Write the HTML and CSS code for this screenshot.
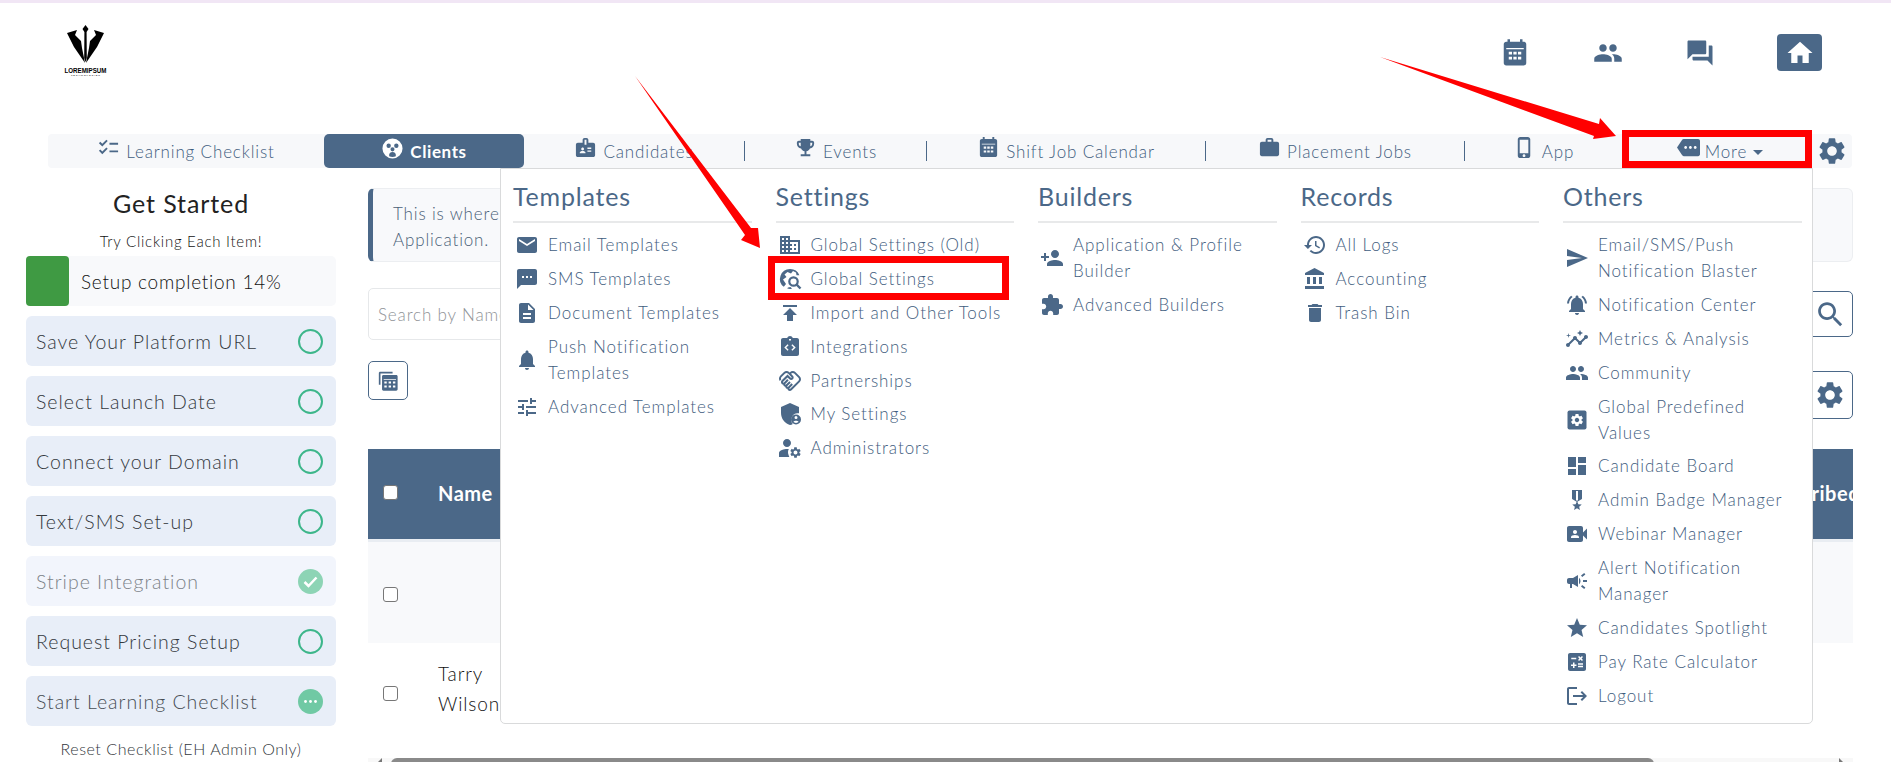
FILE: index.html
```html
<!DOCTYPE html>
<html lang="en">
<head>
<meta charset="utf-8">
<title>Clients</title>
<link rel="stylesheet" href="styles.css">
</head>
<body>
<svg class="defs" width="0" height="0" aria-hidden="true">
<symbol id="i-cal" viewBox="0 0 24 24"><path fill-rule="evenodd" d="M19 3h-1V1h-2v2H8V1H6v2H5c-1.1 0-2 .9-2 2v15c0 1.1.9 2 2 2h14c1.1 0 2-.9 2-2V5c0-1.1-.9-2-2-2zM5 8h14v.9H5zM7 11h2.6v2.2H7zM10.7 11h2.6v2.2h-2.6zM14.4 11H17v2.2h-2.6zM7 15h2.6v2.2H7zM10.7 15h2.6v2.2h-2.6zM14.4 15H17v2.2h-2.6z"/></symbol>
<symbol id="i-people" viewBox="0 0 24 24"><path d="M16 11c1.66 0 2.99-1.34 2.99-3S17.66 5 16 5c-1.66 0-3 1.34-3 3s1.34 3 3 3zm-8 0c1.66 0 2.99-1.34 2.99-3S9.66 5 8 5C6.34 5 5 6.34 5 8s1.34 3 3 3zm0 2c-2.33 0-7 1.17-7 3.5V19h14v-2.5c0-2.33-4.67-3.5-7-3.5zm8 0c-.29 0-.62.02-.97.05 1.16.84 1.97 1.97 1.97 3.45V19h6v-2.5c0-2.33-4.67-3.5-7-3.5z"/></symbol>
<symbol id="i-forum" viewBox="0 0 24 24"><path d="M21 6h-2v9H6v2c0 .55.45 1 1 1h11l4 4V7c0-.55-.45-1-1-1zm-4 6V3c0-.55-.45-1-1-1H3c-.55 0-1 .45-1 1v14l4-4h10c.55 0 1-.45 1-1z"/></symbol>
<symbol id="i-home" viewBox="0 0 24 24"><path d="M10 20v-6h4v6h5v-8h3L12 3 2 12h3v8z"/></symbol>
<symbol id="i-gear" viewBox="0 0 24 24"><path d="M19.14 12.94c.04-.3.06-.61.06-.94 0-.32-.02-.64-.07-.94l2.03-1.58c.18-.14.23-.41.12-.61l-1.92-3.32c-.12-.22-.37-.29-.59-.22l-2.39.96c-.5-.38-1.03-.7-1.62-.94l-.36-2.54c-.04-.24-.24-.41-.48-.41h-3.84c-.24 0-.43.17-.47.41l-.36 2.54c-.59.24-1.13.57-1.62.94l-2.39-.96c-.22-.08-.47 0-.59.22L2.74 8.87c-.12.21-.08.47.12.61l2.03 1.58c-.05.3-.09.63-.09.94s.02.64.07.94l-2.03 1.58c-.18.14-.23.41-.12.61l1.92 3.32c.12.22.37.29.59.22l2.39-.96c.5.38 1.03.7 1.62.94l.36 2.54c.05.24.24.41.48.41h3.84c.24 0 .44-.17.47-.41l.36-2.54c.59-.24 1.13-.56 1.62-.94l2.39.96c.22.08.47 0 .59-.22l1.92-3.32c.12-.22.07-.47-.12-.61l-2.01-1.58zM12 15.6c-1.98 0-3.6-1.62-3.6-3.6s1.62-3.6 3.6-3.6 3.6 1.62 3.6 3.6-1.62 3.6-3.6 3.6z"/></symbol>
<symbol id="i-check" viewBox="0 0 24 24"><path d="M22 7h-9v2h9V7zm0 8h-9v2h9v-2zM5.54 11 2 7.46l1.41-1.41 2.12 2.12 4.24-4.24 1.41 1.41L5.54 11zm0 8L2 15.46l1.41-1.41 2.12 2.12 4.24-4.24 1.41 1.41L5.54 19z"/></symbol>
<symbol id="i-clients" viewBox="0 0 24 24"><path fill-rule="evenodd" d="M12 1.500a10.500 10.500 0 1 0 0 21 10.500 10.500 0 0 0 0-21zM8 6.800a2.300 2.300 0 1 1 0 4.600 2.300 2.300 0 0 1 0-4.600zM16 6.800a2.300 2.300 0 1 1 0 4.600 2.300 2.300 0 0 1 0-4.600zM12 10.800a2.100 2.100 0 1 1 0 4.200 2.100 2.100 0 0 1 0-4.200zM8.500 20c-.3-2.800 1.200-4.300 3.500-4.300s3.800 1.500 3.500 4.300c-2.300 1-4.700 1-7 0z"/></symbol>
<symbol id="i-badge" viewBox="0 0 24 24"><path d="M20 7h-5V4c0-1.1-.9-2-2-2h-2c-1.1 0-2 .9-2 2v3H4c-1.1 0-2 .9-2 2v11c0 1.1.9 2 2 2h16c1.1 0 2-.9 2-2V9c0-1.1-.9-2-2-2zM9 12c.83 0 1.5.67 1.5 1.5S9.83 15 9 15s-1.5-.67-1.5-1.5S8.17 12 9 12zm3 6H6v-.43c0-.6.36-1.15.92-1.39.64-.28 1.34-.43 2.08-.43s1.44.15 2.08.43c.55.24.92.78.92 1.39V18zm1-9h-2V4h2v5zm5 7.5h-4V15h4v1.5zm0-3h-4V12h4v1.5z"/></symbol>
<symbol id="i-trophy" viewBox="0 0 24 24"><path d="M19 5h-2V3H7v2H5c-1.1 0-2 .9-2 2v1c0 2.55 1.92 4.63 4.39 4.94.63 1.5 1.98 2.63 3.61 2.96V19H7v2h10v-2h-4v-3.1c1.63-.33 2.98-1.46 3.61-2.96C19.08 12.63 21 10.55 21 8V7c0-1.1-.9-2-2-2zM5 8V7h2v3.82C5.84 10.4 5 9.3 5 8zm14 0c0 1.3-.84 2.4-2 2.82V7h2v1z"/></symbol>
<symbol id="i-work" viewBox="0 0 24 24"><path d="M20 6h-4V4c0-1.11-.89-2-2-2h-4c-1.11 0-2 .89-2 2v2H4c-1.11 0-1.99.89-1.99 2L2 19c0 1.11.89 2 2 2h16c1.11 0 2-.89 2-2V8c0-1.11-.89-2-2-2zm-6 0h-4V4h4v2z"/></symbol>
<symbol id="i-phone" viewBox="0 0 24 24"><path d="M15.5 1h-8C6.12 1 5 2.12 5 3.5v17C5 21.88 6.12 23 7.5 23h8c1.38 0 2.5-1.12 2.5-2.5v-17C18 2.12 16.88 1 15.5 1zm-4 21c-.83 0-1.5-.67-1.5-1.5s.67-1.5 1.5-1.5 1.5.67 1.5 1.5-.67 1.5-1.5 1.5zm4.5-4H7V4h9v14z"/></symbol>
<symbol id="i-more" viewBox="0 0 24 24"><path d="M22 3H7c-.69 0-1.23.35-1.59.88L0 12l5.41 8.11c.36.53.9.89 1.59.89h15c1.1 0 2-.9 2-2V5c0-1.1-.9-2-2-2zM9 13.5c-.83 0-1.5-.67-1.5-1.5s.67-1.5 1.5-1.5 1.5.67 1.5 1.5-.67 1.5-1.5 1.5zm5 0c-.83 0-1.5-.67-1.5-1.5s.67-1.5 1.5-1.5 1.5.67 1.5 1.5-.67 1.5-1.5 1.5zm5 0c-.83 0-1.5-.67-1.5-1.5s.67-1.5 1.5-1.5 1.5.67 1.5 1.5-.67 1.5-1.5 1.5z"/></symbol>
<symbol id="i-search" viewBox="0 0 24 24"><path d="M15.5 14h-.79l-.28-.27C15.41 12.59 16 11.11 16 9.5 16 5.91 13.09 3 9.5 3S3 5.91 3 9.5 5.91 16 9.5 16c1.61 0 3.09-.59 4.23-1.57l.27.28v.79l5 4.99L20.49 19l-4.99-5zm-6 0C7.01 14 5 11.99 5 9.5S7.01 5 9.5 5 14 7.01 14 9.5 11.99 14 9.5 14z"/></symbol>
<symbol id="i-copycal" viewBox="0 0 24 24"><path d="M2 3.5C2 2.7 2.7 2 3.500 2H17v1.800H3.800V16H2z"/><path fill-rule="evenodd" d="M7 5.500h14c.8 0 1.500.7 1.500 1.500v14c0 .8-.7 1.500-1.500 1.500H7c-.8 0-1.500-.7-1.500-1.500V7c0-.8.7-1.500 1.500-1.500zM7.300 9.800v.9h13.400v-.9zM8 12.500h2.600v2.200H8zM12.700 12.500h2.600v2.200h-2.600zM17.400 12.500H20v2.200h-2.600zM8 16.800h2.600V19H8zM12.700 16.800h2.600V19h-2.600zM17.400 16.800H20V19h-2.600z"/></symbol>
<symbol id="i-email" viewBox="0 0 24 24"><path d="M20 4H4c-1.100 0-1.990.9-1.990 2L2 18c0 1.100.9 2 2 2h16c1.100 0 2-.9 2-2V6c0-1.100-.9-2-2-2zm0 4l-8 5-8-5V6l8 5 8-5v2z"/></symbol>
<symbol id="i-sms" viewBox="0 0 24 24"><path d="M20 2H4c-1.100 0-1.990.9-1.990 2L2 22l4-4h14c1.100 0 2-.9 2-2V4c0-1.100-.9-2-2-2zM9 11H7V9h2v2zm4 0h-2V9h2v2zm4 0h-2V9h2v2z"/></symbol>
<symbol id="i-doc" viewBox="0 0 24 24"><path d="M14 2H6c-1.100 0-1.990.9-1.990 2L4 20c0 1.100.89 2 1.990 2H18c1.100 0 2-.9 2-2V8l-6-6zm2 16H8v-2h8v2zm0-4H8v-2h8v2zm-3-5V3.500L18.500 9H13z"/></symbol>
<symbol id="i-bell" viewBox="0 0 24 24"><path d="M12 22c1.100 0 2-.9 2-2h-4c0 1.100.89 2 2 2zm6-6v-5c0-3.070-1.640-5.640-4.500-6.320V4c0-.83-.67-1.500-1.500-1.500s-1.500.67-1.500 1.500v.68C7.630 5.360 6 7.920 6 11v5l-2 2v1h16v-1l-2-2z"/></symbol>
<symbol id="i-tune" viewBox="0 0 24 24"><path d="M3 17v2h6v-2H3zM3 5v2h10V5H3zm10 16v-2h8v-2h-8v-2h-2v6h2zM7 9v2H3v2h4v2h2V9H7zm14 4v-2H11v2h10zm-6-4h2V7h4V5h-4V3h-2v6z"/></symbol>
<symbol id="i-domain" viewBox="0 0 24 24"><path d="M12 7V3H2v18h20V7H12zM6 19H4v-2h2v2zm0-4H4v-2h2v2zm0-4H4V9h2v2zm0-4H4V5h2v2zm4 12H8v-2h2v2zm0-4H8v-2h2v2zm0-4H8V9h2v2zm0-4H8V5h2v2zm10 12h-8v-2h2v-2h-2v-2h2v-2h-2V9h8v10zm-2-8h-2v2h2v-2zm0 4h-2v2h2v-2z"/></symbol>
<symbol id="i-globe" viewBox="0 0 24 24"><path d="M12 2a10 10 0 0 0-6.200 17.850L8 17l-3-4.500 3.500-2.500L6.500 7.500 9.500 5l3.500 1.500 2-2.500 3 1.500.5 2.800h2.900A10 10 0 0 0 12 2zM12.500 20l-2.500.5-.8 1.100A10 10 0 0 0 14 21.800z"/><circle cx="15.500" cy="14.500" r="4.200" fill="none" stroke="currentColor" stroke-width="2.200"/><path d="M18.500 17.500 22.500 21.500" stroke="currentColor" stroke-width="2.400"/></symbol>
<symbol id="i-publish" viewBox="0 0 24 24"><path d="M5 4v2h14V4H5zm0 10h4v6h6v-6h4l-7-7-7 7z"/></symbol>
<symbol id="i-code" viewBox="0 0 24 24"><path fill-rule="evenodd" d="M19 3h-4.180C14.400 1.840 13.300 1 12 1s-2.400.84-2.820 2H5c-1.100 0-2 .9-2 2v14c0 1.100.9 2 2 2h14c1.100 0 2-.9 2-2V5c0-1.100-.9-2-2-2zM11 4h2v1.500h-2zM9.600 9.200l1 1-2.300 2.300 2.300 2.300-1 1-3.300-3.300zM14.400 9.200l3.300 3.300-3.300 3.300-1-1 2.300-2.300-2.300-2.300z"/></symbol>
<symbol id="i-hands" viewBox="0 0 24 24"><path d="M12.220 19.850c-.18.18-.5.21-.71 0-.18-.18-.21-.5 0-.71l3.390-3.390-1.410-1.410-3.390 3.390c-.19.2-.51.19-.71 0-.21-.21-.18-.53 0-.71l3.390-3.390-1.410-1.410-3.390 3.390c-.18.18-.5.21-.71 0-.19-.19-.19-.51 0-.71l3.390-3.390-1.420-1.410-3.390 3.390c-.18.18-.5.21-.71 0-.19-.2-.19-.51 0-.71L9.520 8.400l1.870 1.860c.95.95 2.590.94 3.540 0 .98-.98.98-2.560 0-3.540l-1.860-1.860.28-.28c.78-.78 2.050-.78 2.830 0l4.240 4.240c.78.78.78 2.050 0 2.830l-8.200 8.200zm9.610-6.780c1.560-1.560 1.560-4.090 0-5.660l-4.240-4.240c-1.560-1.560-4.090-1.560-5.660 0l-.28.28-.28-.28c-1.560-1.560-4.090-1.560-5.660 0L2.170 6.710c-1.420 1.420-1.550 3.630-.4 5.190l1.450-1.450c-.39-.75-.26-1.700.37-2.330l3.540-3.540c.78-.78 2.050-.78 2.830 0l3.560 3.560c.18.18.21.5 0 .71-.21.21-.53.18-.71 0L9.520 5.570l-5.800 5.790c-.98.97-.98 2.560 0 3.540.39.39.89.63 1.420.7.07.52.3 1.020.7 1.420.4.4.9.63 1.420.7.07.52.3 1.020.7 1.420.4.4.9.63 1.420.7.07.54.31 1.030.7 1.420.47.47 1.100.73 1.770.73.67 0 1.300-.26 1.770-.73l8.210-8.190z"/></symbol>
<symbol id="i-shield" viewBox="0 0 24 24"><path d="M12 1 3 5v6c0 5.550 3.840 10.740 9 12 1-.25 1.900-.6 2.800-1.100A6.500 6.500 0 0 1 21 11.300V5z"/><path fill-rule="evenodd" d="M18 12.500a5 5 0 1 0 0 10 5 5 0 0 0 0-10zm0 1.600a1.500 1.500 0 1 1 0 3 1.500 1.500 0 0 1 0-3zm0 6.900c-1.100 0-2-.5-2.500-1.200.4-.7 1.500-1 2.500-1s2.100.3 2.500 1c-.5.7-1.400 1.200-2.500 1.200z"/></symbol>
<symbol id="i-admin" viewBox="0 0 24 24"><path d="M9 11c2.200 0 4-1.800 4-4s-1.800-4-4-4-4 1.800-4 4 1.800 4 4 4zm1 2.100C9.700 13 9.300 13 9 13c-2.700 0-8 1.300-8 4v4h10.300C10.500 19 10 17.600 10 16c0-1 .3-2 .8-2.900z"/><use href="#i-gear" x="11" y="10" width="13" height="13"/></symbol>
<symbol id="i-personadd" viewBox="0 0 24 24"><path d="M15 12c2.210 0 4-1.790 4-4s-1.790-4-4-4-4 1.790-4 4 1.790 4 4 4zm-9-2V7H4v3H1v2h3v3h2v-3h3v-2H6zm9 4c-2.670 0-8 1.340-8 4v2h16v-2c0-2.660-5.330-4-8-4z"/></symbol>
<symbol id="i-puzzle" viewBox="0 0 24 24"><path d="M20.500 11H19V7c0-1.100-.9-2-2-2h-4V3.500C13 2.120 11.880 1 10.500 1S8 2.120 8 3.500V5H4c-1.100 0-1.990.9-1.990 2v3.800H3.500c1.490 0 2.700 1.210 2.700 2.700s-1.210 2.700-2.700 2.700H2V20c0 1.100.9 2 2 2h3.800v-1.500c0-1.490 1.210-2.700 2.700-2.700 1.490 0 2.700 1.210 2.700 2.700V22H17c1.100 0 2-.9 2-2v-4h1.500c1.380 0 2.500-1.120 2.500-2.500S21.880 11 20.500 11z"/></symbol>
<symbol id="i-history" viewBox="0 0 24 24"><path d="M13 3c-4.970 0-9 4.030-9 9H1l3.890 3.890.07.14L9 12H6c0-3.870 3.130-7 7-7s7 3.130 7 7-3.130 7-7 7c-1.930 0-3.680-.79-4.940-2.060l-1.420 1.420C8.270 19.990 10.510 21 13 21c4.970 0 9-4.030 9-9s-4.030-9-9-9zm-1 5v5l4.280 2.540.72-1.210-3.500-2.080V8H12z"/></symbol>
<symbol id="i-bank" viewBox="0 0 24 24"><path d="M4 10v7h3v-7H4zm6 0v7h3v-7h-3zM2 22h19v-3H2v3zm14-12v7h3v-7h-3zm-4.500-9L2 6v2h19V6l-9.500-5z"/></symbol>
<symbol id="i-trash" viewBox="0 0 24 24"><path d="M6 19c0 1.100.9 2 2 2h8c1.100 0 2-.9 2-2V7H6v12zM19 4h-3.500l-1-1h-5l-1 1H5v2h14V4z"/></symbol>
<symbol id="i-send" viewBox="0 0 24 24"><path d="M2.010 21 23 12 2.010 3 2 10l15 2-15 2z"/></symbol>
<symbol id="i-bellact" viewBox="0 0 24 24"><path d="M7.580 4.080 6.150 2.650C3.750 4.480 2.170 7.300 2.030 10.500h2c.15-2.650 1.510-4.970 3.550-6.420zm12.390 6.420h2c-.15-3.200-1.730-6.020-4.120-7.850l-1.420 1.430c2.020 1.450 3.390 3.770 3.540 6.420zM18 11c0-3.070-1.640-5.640-4.500-6.320V4c0-.83-.67-1.500-1.500-1.500s-1.500.67-1.500 1.500v.68C7.630 5.360 6 7.920 6 11v5l-2 2v1h16v-1l-2-2v-5zm-6 11c.14 0 .27-.01.4-.04.65-.14 1.180-.58 1.440-1.180.1-.24.15-.5.15-.78h-4c.01 1.100.9 2 2.010 2z"/></symbol>
<symbol id="i-insights" viewBox="0 0 24 24"><path d="M21 8c-1.450 0-2.260 1.440-1.930 2.510l-3.550 3.560c-.3-.09-.74-.09-1.040 0l-2.550-2.550C12.270 10.450 11.460 9 10 9c-1.450 0-2.270 1.440-1.930 2.520l-4.560 4.550C2.440 15.740 1 16.550 1 18c0 1.100.9 2 2 2 1.450 0 2.260-1.440 1.930-2.510l4.550-4.560c.3.09.74.09 1.040 0l2.550 2.550C12.730 16.550 13.540 18 15 18c1.450 0 2.270-1.440 1.930-2.520l3.560-3.550c1.070.33 2.510-.48 2.510-1.930 0-1.100-.9-2-2-2z"/><path d="M15 9l.94-2.070L18 6l-2.060-.93L15 3l-.92 2.070L12 6l2.080.93zM3.500 11 4 9l2-.5L4 8l-.5-2L3 8l-2 .5L3 9z"/></symbol>
<symbol id="i-sq-gear" viewBox="0 0 24 24"><rect x="2.500" y="2.500" width="19" height="19" rx="2"/><use href="#i-gear" x="4.500" y="4.500" width="15" height="15" fill="#fff"/></symbol>
<symbol id="i-board" viewBox="0 0 24 24"><path d="M3 13h8V3H3v10zm0 8h8v-6H3v6zm10 0h8V11h-8v10zm0-18v6h8V3h-8z"/></symbol>
<symbol id="i-medal" viewBox="0 0 24 24"><path d="M17 10.430V2H7v8.430c0 .35.18.68.49.86l4.180 2.510-.99 2.340-3.410.29 2.590 2.240L9.070 22 12 20.230 14.930 22l-.78-3.330 2.590-2.240-3.410-.29-.99-2.340 4.180-2.510c.3-.18.48-.5.48-.86zm-4 1.800-1 .6-1-.6V3h2v9.230z"/></symbol>
<symbol id="i-video" viewBox="0 0 24 24"><path d="M18 10.480V6c0-1.100-.9-2-2-2H4c-1.100 0-2 .9-2 2v12c0 1.100.9 2 2 2h12c1.100 0 2-.9 2-2v-4.480l4 3.980v-11l-4 3.980zM10 8c1.100 0 2 .9 2 2s-.9 2-2 2-2-.9-2-2 .9-2 2-2zm4 8H6v-.57c0-.81.48-1.530 1.220-1.850.85-.37 1.790-.58 2.780-.58.99 0 1.930.21 2.780.58.74.32 1.220 1.040 1.220 1.850V16z"/></symbol>
<symbol id="i-campaign" viewBox="0 0 24 24"><path d="M18 11v2h4v-2h-4zm-2 6.610c.96.71 2.210 1.650 3.200 2.390.4-.53.8-1.070 1.200-1.600-.99-.74-2.240-1.680-3.200-2.400-.4.54-.8 1.080-1.200 1.610zM20.400 5.600c-.4-.53-.8-1.070-1.200-1.600-.99.74-2.240 1.680-3.200 2.400.4.53.8 1.070 1.200 1.600.96-.72 2.210-1.650 3.200-2.400zM4 9c-1.100 0-2 .9-2 2v2c0 1.100.9 2 2 2h1v4h2v-4h1l5 3V6L8 9H4zm11.500 3c0-1.330-.58-2.530-1.500-3.350v6.690c.92-.81 1.500-2.010 1.500-3.340z"/></symbol>
<symbol id="i-star" viewBox="0 0 24 24"><path d="M12 17.270 18.180 21l-1.640-7.030L22 9.240l-7.190-.61L12 2 9.190 8.630 2 9.240l5.460 4.730L5.820 21z"/></symbol>
<symbol id="i-calc" viewBox="0 0 24 24"><path d="M19 3H5c-1.100 0-2 .9-2 2v14c0 1.100.9 2 2 2h14c1.100 0 2-.9 2-2V5c0-1.100-.9-2-2-2zm-5.970 4.060L14.090 6l1.410 1.410L16.910 6l1.060 1.060-1.410 1.410 1.410 1.410-1.060 1.060-1.410-1.400-1.410 1.410-1.060-1.060 1.410-1.410-1.410-1.420zM6.250 7.720h5v1.500h-5v-1.500zM11.500 16h-2v2H8v-2H6v-1.500h2v-2h1.500v2h2V16zm6.500 1.250h-5v-1.500h5v1.500zm0-2.500h-5v-1.500h5v1.500z"/></symbol>
<symbol id="i-logout" viewBox="0 0 24 24"><path d="M17 7l-1.410 1.410L18.170 11H8v2h10.170l-2.580 2.580L17 17l5-5zM4 5h8V3H4c-1.100 0-2 .9-2 2v14c0 1.100.9 2 2 2h8v-2H4V5z"/></symbol>
</svg>

<div class="topline"></div>

<header class="header">
  <svg class="logo" viewBox="64 25 43 54" role="img" aria-label="Lorem Ipsum logo">
    <path d="M67 33 77 30 75 35 81 41 82 48 85 63 74 47Z"/>
    <path d="M104 33 94 30 96 35 90 41 89 48 86 63 97 47Z"/>
    <path d="M85.500 25 88.500 29 86.600 32 86.800 58 85.500 62 84.200 58 84.400 32 82.500 29Z"/>
    <text class="logo-main" x="64.500" y="72.500" textLength="42" lengthAdjust="spacingAndGlyphs">LOREMIPSUM</text>
    <text class="logo-sub" x="71" y="76" textLength="29" lengthAdjust="spacing">TECHNOLOGIES</text>
  </svg>
  <div class="quick">
    <a class="quick-item"><svg class="ic ic-30"><use href="#i-cal"/></svg></a>
    <a class="quick-item"><svg class="ic ic-30"><use href="#i-people"/></svg></a>
    <a class="quick-item"><svg class="ic ic-30"><use href="#i-forum"/></svg></a>
    <a class="quick-item quick-home"><svg class="ic ic-30"><use href="#i-home"/></svg></a>
  </div>
</header>

<nav class="nav">
  <a class="nav-item"><svg class="ic ic-nav"><use href="#i-check"/></svg><span>Learning Checklist</span></a>
  <a class="nav-item active"><svg class="ic ic-nav"><use href="#i-clients"/></svg><span>Clients</span></a>
  <a class="nav-item sep"><svg class="ic ic-nav"><use href="#i-badge"/></svg><span>Candidates</span></a>
  <a class="nav-item sep"><svg class="ic ic-nav"><use href="#i-trophy"/></svg><span>Events</span></a>
  <a class="nav-item sep"><svg class="ic ic-nav"><use href="#i-cal"/></svg><span>Shift Job Calendar</span></a>
  <a class="nav-item sep"><svg class="ic ic-nav"><use href="#i-work"/></svg><span>Placement Jobs</span></a>
  <a class="nav-item"><svg class="ic ic-nav"><use href="#i-phone"/></svg><span>App</span></a>
  <a class="nav-item nav-more"><svg class="ic ic-nav"><use href="#i-more"/></svg><span>More</span><i class="caret"></i></a>
  <a class="nav-item"><svg class="ic ic-gear"><use href="#i-gear"/></svg></a>

  <div class="menu">
    <section class="menu-col">
      <h3>Templates</h3>
      <ul>
        <li><svg class="ic"><use href="#i-email"/></svg><span>Email Templates</span></li>
        <li><svg class="ic"><use href="#i-sms"/></svg><span>SMS Templates</span></li>
        <li><svg class="ic"><use href="#i-doc"/></svg><span>Document Templates</span></li>
        <li><svg class="ic"><use href="#i-bell"/></svg><span>Push Notification<br>Templates</span></li>
        <li><svg class="ic"><use href="#i-tune"/></svg><span>Advanced Templates</span></li>
      </ul>
    </section>
    <section class="menu-col">
      <h3>Settings</h3>
      <ul>
        <li><svg class="ic"><use href="#i-domain"/></svg><span>Global Settings (Old)</span></li>
        <li><svg class="ic"><use href="#i-globe"/></svg><span>Global Settings</span></li>
        <li><svg class="ic"><use href="#i-publish"/></svg><span>Import and Other Tools</span></li>
        <li><svg class="ic"><use href="#i-code"/></svg><span>Integrations</span></li>
        <li><svg class="ic"><use href="#i-hands"/></svg><span>Partnerships</span></li>
        <li><svg class="ic"><use href="#i-shield"/></svg><span>My Settings</span></li>
        <li><svg class="ic"><use href="#i-admin"/></svg><span>Administrators</span></li>
      </ul>
    </section>
    <section class="menu-col">
      <h3>Builders</h3>
      <ul>
        <li><svg class="ic"><use href="#i-personadd"/></svg><span>Application &amp; Profile<br>Builder</span></li>
        <li><svg class="ic"><use href="#i-puzzle"/></svg><span>Advanced Builders</span></li>
      </ul>
    </section>
    <section class="menu-col">
      <h3>Records</h3>
      <ul>
        <li><svg class="ic"><use href="#i-history"/></svg><span>All Logs</span></li>
        <li><svg class="ic"><use href="#i-bank"/></svg><span>Accounting</span></li>
        <li><svg class="ic"><use href="#i-trash"/></svg><span>Trash Bin</span></li>
      </ul>
    </section>
    <section class="menu-col">
      <h3>Others</h3>
      <ul>
        <li><svg class="ic"><use href="#i-send"/></svg><span>Email/SMS/Push<br>Notification Blaster</span></li>
        <li><svg class="ic"><use href="#i-bellact"/></svg><span>Notification Center</span></li>
        <li><svg class="ic"><use href="#i-insights"/></svg><span>Metrics &amp; Analysis</span></li>
        <li><svg class="ic"><use href="#i-people"/></svg><span>Community</span></li>
        <li><svg class="ic"><use href="#i-sq-gear"/></svg><span>Global Predefined<br>Values</span></li>
        <li><svg class="ic"><use href="#i-board"/></svg><span>Candidate Board</span></li>
        <li><svg class="ic"><use href="#i-medal"/></svg><span>Admin Badge Manager</span></li>
        <li><svg class="ic"><use href="#i-video"/></svg><span>Webinar Manager</span></li>
        <li><svg class="ic"><use href="#i-campaign"/></svg><span>Alert Notification<br>Manager</span></li>
        <li><svg class="ic"><use href="#i-star"/></svg><span>Candidates Spotlight</span></li>
        <li><svg class="ic"><use href="#i-calc"/></svg><span>Pay Rate Calculator</span></li>
        <li><svg class="ic"><use href="#i-logout"/></svg><span>Logout</span></li>
      </ul>
    </section>
  </div>
</nav>

<div class="content">
  <aside class="side">
    <h2>Get Started</h2>
    <p class="try">Try Clicking Each Item!</p>
    <div class="progress"><span class="progress-fill"></span><span class="progress-label">Setup completion 14%</span></div>
    <div class="step"><span>Save Your Platform URL</span><i class="ring"></i></div>
    <div class="step"><span>Select Launch Date</span><i class="ring"></i></div>
    <div class="step"><span>Connect your Domain</span><i class="ring"></i></div>
    <div class="step"><span>Text/SMS Set-up</span><i class="ring"></i></div>
    <div class="step done"><span>Stripe Integration</span><svg class="ring-fill" viewBox="0 0 25 25"><circle cx="12.5" cy="12.5" r="12.5"/><path d="M6.500 13 10.500 17 18.500 8.500"/></svg></div>
    <div class="step"><span>Request Pricing Setup</span><i class="ring"></i></div>
    <div class="step current"><span>Start Learning Checklist</span><svg class="ring-fill" viewBox="0 0 25 25"><circle cx="12.500" cy="12.500" r="12.500"/><g class="dots"><circle cx="7.500" cy="12.500" r="1.400"/><circle cx="12.500" cy="12.500" r="1.400"/><circle cx="17.500" cy="12.500" r="1.400"/></g></svg></div>
    <p class="reset">Reset Checklist (EH Admin Only)</p>
  </aside>

  <main class="main">
    <div class="alert">This is where<br>Application.</div>
    <div class="search-row">
      <input class="search" type="text" placeholder="Search by Name">
      <button class="btn btn-search"><svg class="ic ic-search"><use href="#i-search"/></svg></button>
    </div>
    <div class="tool-row">
      <button class="btn btn-copy"><svg class="ic ic-copy"><use href="#i-copycal"/></svg></button>
      <button class="btn btn-gear"><svg class="ic ic-32"><use href="#i-gear"/></svg></button>
    </div>
    <div class="table">
      <div class="thead"><input class="chk" type="checkbox"><span class="th-name">Name</span><span class="th-last">Subscribed</span></div>
      <div class="row row-alt"><input class="chk" type="checkbox"></div>
      <div class="row"><input class="chk" type="checkbox"><span class="td-name">Tarry<br>Wilson</span></div>
    </div>
    <div class="hscroll"><i class="arrow-l"></i><span class="thumb"></span><i class="arrow-r"></i></div>
  </main>
</div>

<svg class="marks" viewBox="0 0 1891 762" aria-hidden="true">
  <polygon points="635,76 751,228 758,228 760,248 741,240 745,235"/>
  <polygon points="1380,57 1599,124 1600,118 1616,136 1593,139 1594,136"/>
  <rect x="1625.500" y="133.500" width="183" height="31"/>
  <rect x="771.500" y="259.500" width="234" height="37"/>
</svg>
</body>
</html>
```

FILE: styles.css
```css
* { box-sizing: border-box; }

html, body {
  margin: 0;
  width: 1891px;
  height: 762px;
  overflow: hidden;
  background: #fff;
}

body {
  position: relative;
  font-family: "Lato", "Open Sans", sans-serif;
  font-weight: 300;
  color: #1f2327;
}

.defs { position: absolute; }

.ic {
  width: 24px;
  height: 24px;
  flex: none;
  fill: currentColor;
}
.ic-30 { width: 30px; height: 30px; }
.ic-32 { width: 32px; height: 32px; }

.topline {
  height: 3px;
  background: #f1e6f5;
}

/* header */
.header {
  height: 131px;
  display: flex;
  justify-content: space-between;
  padding: 22px 69px 0 64px;
}
.logo { width: 43px; height: 54px; fill: #000; }
.logo-main { font: 700 7px "Liberation Sans", sans-serif; }
.logo-sub { font: 400 2.500px "Liberation Sans", sans-serif; }

.quick {
  display: flex;
  gap: 47.500px;
  height: 37px;
  margin-top: 9px;
}
.quick-item {
  width: 45px;
  display: flex;
  align-items: center;
  justify-content: center;
  color: #4b6888;
}
.quick-home {
  margin-left: 7px;
  background: #4b6888;
  color: #fff;
  border-radius: 4px;
}

/* nav */
.nav {
  position: relative;
  margin-left: 48px;
  width: 1804px;
  height: 34px;
  background: #f7f8fa;
  border-radius: 4px;
  display: grid;
  grid-template-columns: 276px 200px 221px 182px 279px 259px 157px 190px 40px;
  align-items: center;
  font-size: 17px;
  letter-spacing: .85px;
  color: #3f5d7e;
}
.nav-item {
  height: 20px;
  display: flex;
  align-items: center;
  justify-content: center;
  gap: 6px;
}
.ic-nav {
  width: 23px;
  height: 23px;
  color: #4b6888;
  margin-top: -8px;
}
.ic-gear { width: 32px; height: 32px; color: #4b6888; }
.nav-item.sep { border-right: 1px solid #4b6888; }
.nav-item.active {
  height: 34px;
  background: #4b6888;
  border-radius: 5px;
  color: #fff;
  font-weight: 700;
  letter-spacing: .6px;
}
.nav-item.active .ic-nav { color: #fff; margin-top: -5px; }
.nav-more { gap: 5px; padding-left: 6px; }
.caret {
  margin-left: 1px;
  margin-top: 3px;
  border: 5.500px solid transparent;
  border-top-color: #4b6888;
  border-bottom: 0;
}

/* dropdown */
.menu {
  position: absolute;
  top: 34px;
  right: 39px;
  width: 1313px;
  height: 556px;
  z-index: 2;
  display: grid;
  grid-template-columns: repeat(5, 238.500px);
  column-gap: 24px;
  padding: 12px;
  background: #fff;
  border: 1px solid #d9dadb;
  border-radius: 0 0 5px 5px;
}
.menu-col h3 {
  margin: 0;
  height: 42px;
  border-bottom: 2px solid #e8e9ea;
  font-size: 25px;
  font-weight: 400;
  line-height: 30px;
  letter-spacing: .8px;
  color: #4b6888;
}
.menu-col ul {
  margin: 5px 0 0;
  padding: 0;
  list-style: none;
}
.menu-col li {
  display: flex;
  align-items: center;
  gap: 9px;
  padding: 4px 0 3.900px 2px;
  font-size: 17px;
  line-height: 26px;
  letter-spacing: .95px;
  color: #3f5d7e;
}
.menu-col li svg { color: #4b6888; }

/* layout */
.content {
  display: flex;
  gap: 32px;
  padding: 0 38px 0 26px;
}

/* sidebar */
.side { width: 310px; flex: none; }
.side h2 {
  margin: 20px 0 0;
  font-size: 25px;
  font-weight: 400;
  line-height: 30px;
  letter-spacing: .9px;
  text-align: center;
  color: #222;
}
.try {
  margin: 13px 0 0;
  font-size: 15px;
  line-height: 20px;
  letter-spacing: .75px;
  text-align: center;
  color: #111;
}
.progress {
  margin-top: 5px;
  height: 50px;
  display: flex;
  align-items: center;
  background: #f8f9fb;
  border-radius: 5px;
}
.progress-fill {
  width: 43px;
  height: 50px;
  background: #3f9a43;
  border-radius: 4px;
}
.progress-label {
  margin-left: 12px;
  font-size: 19px;
  letter-spacing: .75px;
  color: #111;
}
.step {
  margin-top: 10px;
  height: 50px;
  display: flex;
  align-items: center;
  justify-content: space-between;
  padding: 0 13px 0 10px;
  background: #e8eef8;
  border-radius: 6px;
  font-size: 19.500px;
  letter-spacing: 1px;
  color: #33383d;
}
.ring {
  width: 25px;
  height: 25px;
  border: 2.500px solid #3cb68a;
  border-radius: 50%;
}
.ring-fill { width: 25px; height: 25px; fill: #70c9a4; }
.ring-fill path { fill: none; stroke: #fff; stroke-width: 2.500; }
.dots { fill: #fff; }
.step.done { background: #f2f5fc; color: #7c8288; }
.step.done .ring-fill { fill: #8dd4b5; }
.step.current { color: #474d54; }
.reset {
  margin: 13px 0 0;
  font-size: 16px;
  line-height: 20px;
  letter-spacing: .55px;
  text-align: center;
  color: #33383d;
}

/* main */
.main { flex: 1; min-width: 0; padding-top: 20px; }
.alert {
  height: 74px;
  padding: 12px 20px;
  background: #f8f9fb;
  border: 1px solid #eceef1;
  border-left: 5px solid #4b6888;
  border-radius: 6px;
  font-size: 17px;
  line-height: 26px;
  letter-spacing: .85px;
  color: #4a5f77;
}
.search-row {
  margin-top: 26px;
  display: flex;
  align-items: center;
  gap: 6px;
}
.search {
  flex: 1;
  height: 52px;
  padding: 0 9px;
  border: 1px solid #e6e8ea;
  border-radius: 5px;
  font: 300 17px "Lato", sans-serif;
  letter-spacing: .85px;
}
.search::placeholder { color: #8f9397; }
.btn {
  padding: 0;
  display: flex;
  align-items: center;
  justify-content: center;
  background: #fff;
  border: 1px solid #4b6888;
  border-radius: 5px;
  color: #4b6888;
}
.btn-search { width: 46px; height: 46px; }
.ic-search { width: 33px; height: 33px; }
.tool-row {
  margin-top: 21px;
  height: 58px;
  display: flex;
  justify-content: space-between;
}
.btn-copy { width: 40px; height: 39px; }
.ic-copy { width: 22px; height: 22px; }
.btn-gear { width: 46px; height: 48px; margin-top: 10px; }

/* table */
.table { margin-top: 30px; height: 294px; overflow: hidden; }
.thead {
  height: 93px;
  display: flex;
  align-items: center;
  padding: 0 0 3px 15px;
  background: #4b6888;
  border-bottom: 3px solid #e9edf2;
  color: #fff;
  font-size: 20px;
  font-weight: 700;
  letter-spacing: .5px;
  overflow: hidden;
}
.chk {
  appearance: none;
  margin: 0;
  width: 15px;
  height: 15px;
  flex: none;
  background: #fff;
  border: 1px solid #777;
  border-radius: 3px;
}
.th-name { margin-left: 40px; }
.th-last { margin-left: auto; margin-right: -7px; }
.row {
  height: 101px;
  display: flex;
  align-items: center;
  padding-left: 15px;
}
.row-alt { background: #f8f9fb; padding-top: 4px; }
.td-name {
  margin: -10px 0 0 40px;
  font-size: 19px;
  line-height: 30px;
  letter-spacing: .85px;
  color: #111;
}

/* scrollbar */
.hscroll {
  margin-top: 15px;
  height: 15px;
  display: flex;
  align-items: flex-start;
  background: #f8f8f8;
  padding: 0 7px;
}
.thumb {
  width: 1263px;
  height: 15px;
  margin-left: 9px;
  background: #8a8a8a;
  border-radius: 6px;
}
.arrow-l, .arrow-r {
  width: 0;
  height: 0;
  border: 7px solid transparent;
}
.arrow-l { border-right-color: #777; border-left: 0; }
.arrow-r { border-left-color: #777; border-right: 0; margin-left: auto; }

/* annotations */
.marks {
  position: absolute;
  left: 0;
  top: 0;
  width: 1891px;
  height: 762px;
  z-index: 5;
  pointer-events: none;
}
.marks polygon { fill: #f00; }
.marks rect { fill: none; stroke: #f00; stroke-width: 7; }
```
